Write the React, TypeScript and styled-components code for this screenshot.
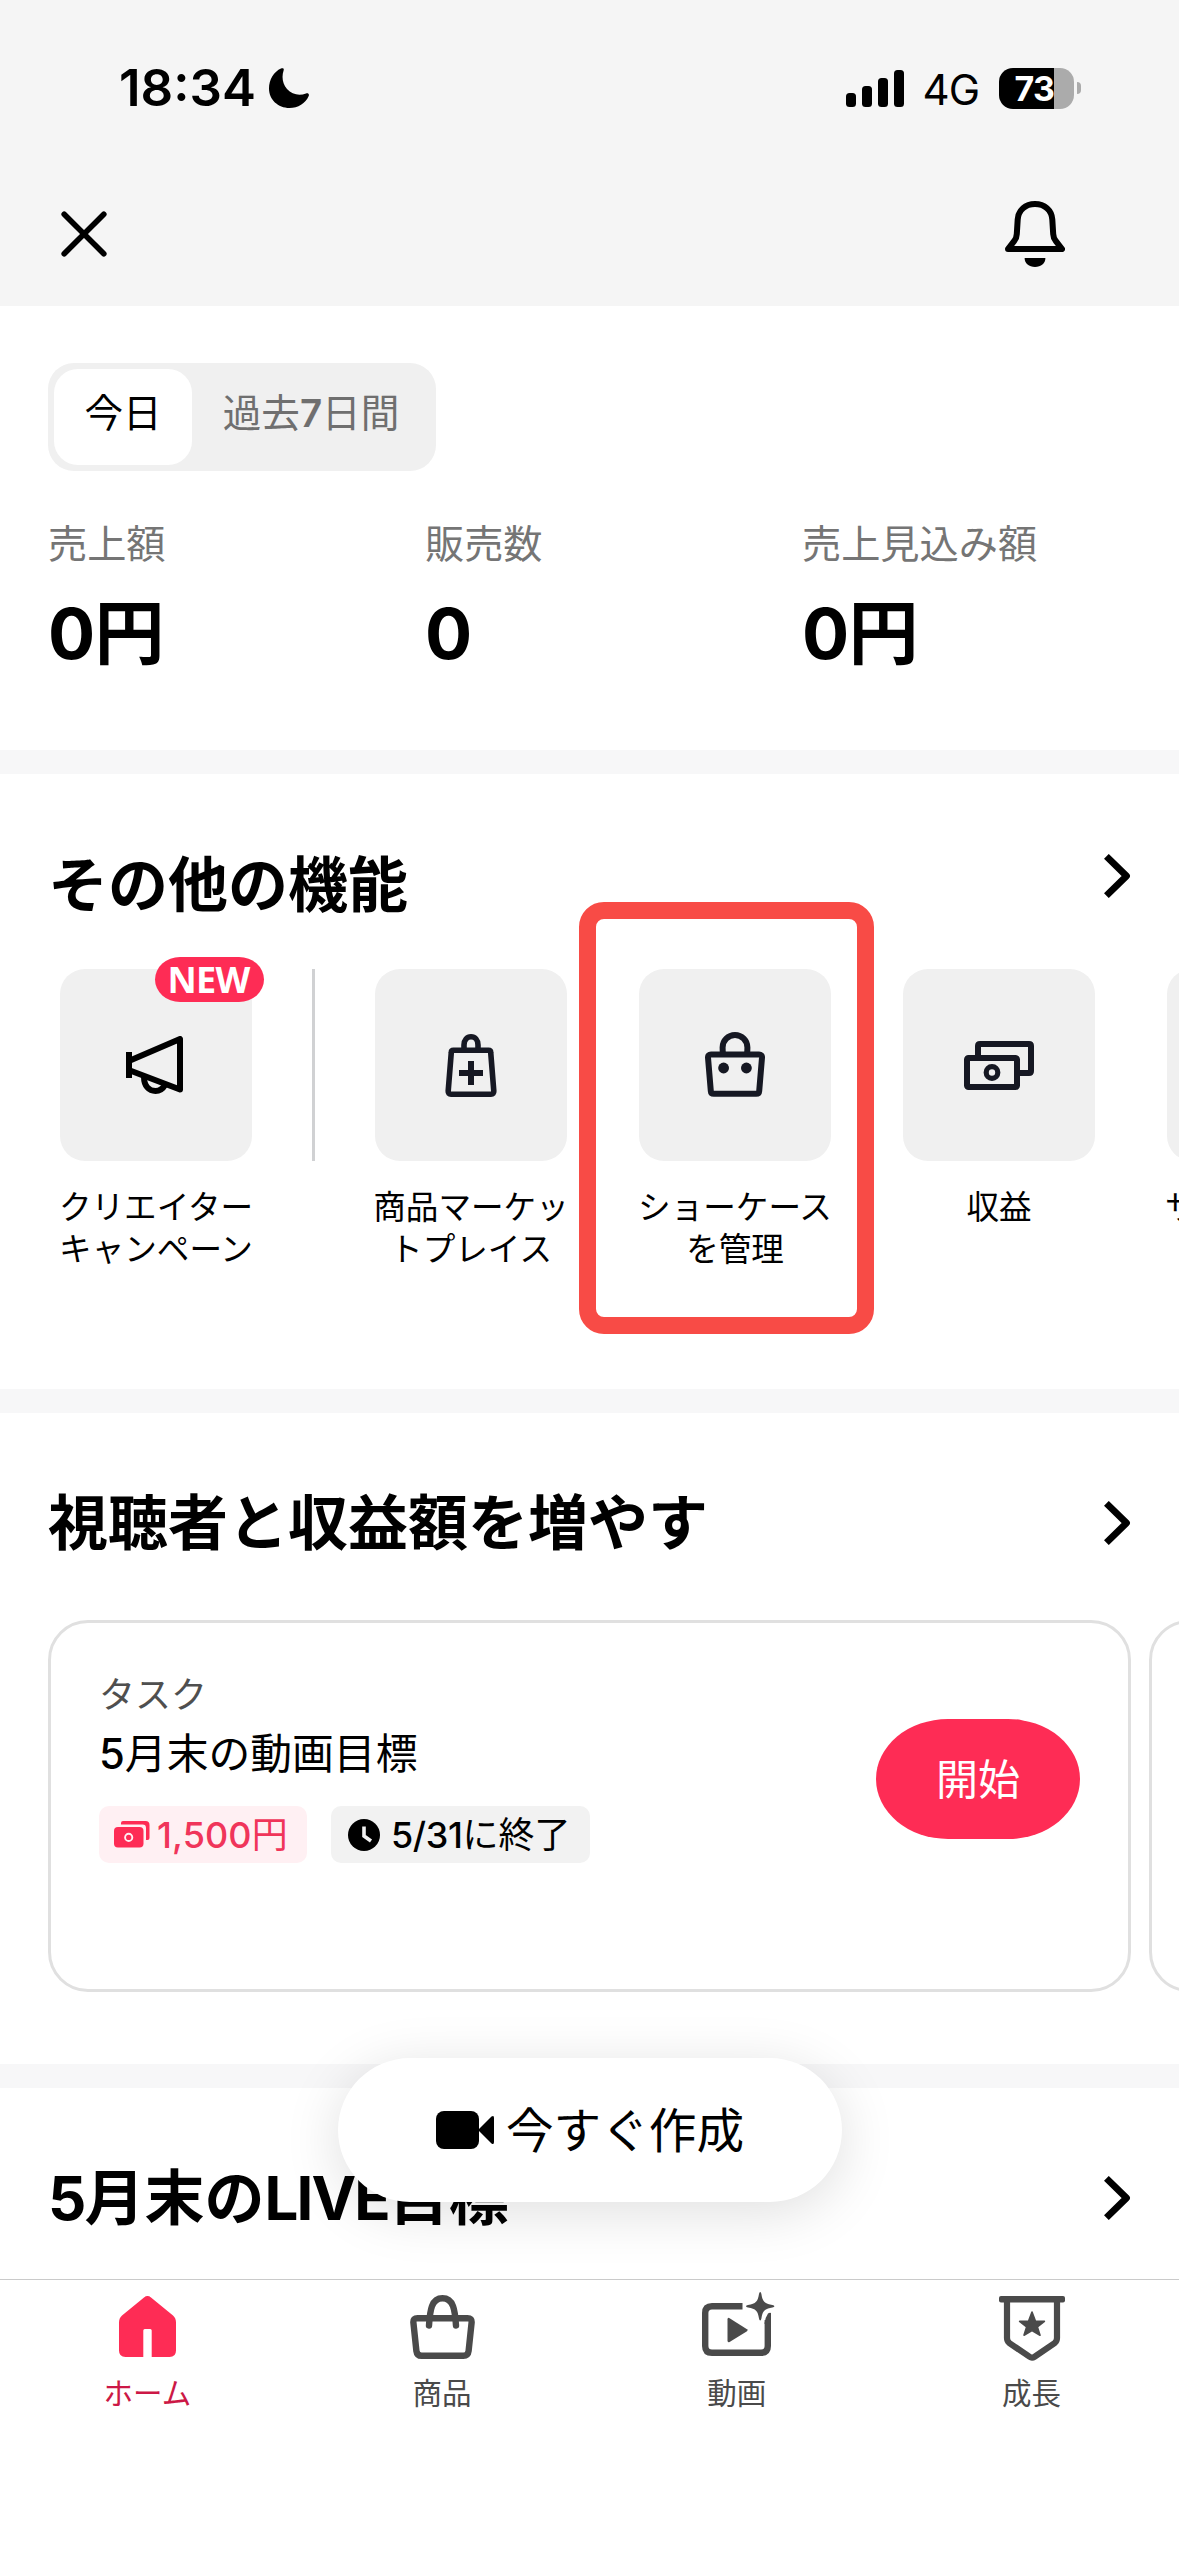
import React from "react";
import styled, { createGlobalStyle, css } from "styled-components";

const PINK = "#fe2c55";
const INK = "#161823";

const GlobalStyle = createGlobalStyle`
  *, *::before, *::after { box-sizing: border-box; }
  body {
    margin: 0;
    background: #fff;
    color: #000;
    font-family: Inter, "Noto Sans CJK JP", sans-serif;
  }
  button {
    margin: 0; padding: 0; border: 0; background: none;
    color: inherit; font: inherit; cursor: pointer;
  }
  h2, p, dl, dt, dd { margin: 0; }
  svg { display: block; flex: none; }
`;

const Screen = styled.div`
  width: 1179px;
  height: 2556px;
  display: flex;
  flex-direction: column;
  overflow: hidden;
  background: #fff;
`;

/* ---------- header ---------- */

const Header = styled.header`
  height: 306px;
  flex: none;
  background: #f5f5f5;
`;

const StatusBar = styled.div`
  height: 176px;
  padding: 0 98px 0 119px;
  display: flex;
  align-items: center;
  justify-content: space-between;
`;

const StatusGroup = styled.div<{ $gap: number }>`
  display: flex;
  align-items: center;
  gap: ${(p) => p.$gap}px;
`;

const Clock = styled.span`
  font-size: 51px;
  line-height: 60px;
  font-weight: 600;
  letter-spacing: 0;
`;

const Network = styled.span`
  font-size: 42px;
  line-height: 50px;
  letter-spacing: -1px;
  margin: 3px 1px 0 0;
`;

const Signal = styled.div`
  display: flex;
  align-items: flex-end;
  gap: 6px;
  height: 37px;
`;

const SignalBar = styled.i<{ $h: number }>`
  width: 10px;
  height: ${(p) => p.$h}px;
  border-radius: 3.5px;
  background: #000;
`;

const Battery = styled.div`
  display: flex;
  align-items: center;
  gap: 3px;
`;

const BatteryBody = styled.div`
  width: 75px;
  height: 41px;
  border-radius: 14px;
  background: linear-gradient(90deg, #000 55px, #ababab 55px);
  color: #fff;
  font-size: 34px;
  font-weight: 700;
  line-height: 41px;
  text-align: center;
  letter-spacing: -0.6px;
  padding-right: 4px;
`;

const BatteryCap = styled.i`
  width: 4px;
  height: 12px;
  border-radius: 0 6px 6px 0;
  background: #ababab;
`;

const NavBar = styled.div`
  display: flex;
  align-items: center;
  justify-content: space-between;
  height: 116px;
  padding: 0 114px 0 61px;
`;

/* ---------- sections ---------- */

const Content = styled.main`
  position: relative;
  flex: 1;
  min-height: 0;
  overflow: hidden;
`;

const Section = styled.section<{ $h: number; $last?: boolean }>`
  height: ${(p) => p.$h}px;
  overflow: hidden;
  ${(p) => !p.$last && css`border-bottom: 24px solid #f7f7f8;`}
`;

const SectionHead = styled.div<{ $top: number; $lift?: number }>`
  display: flex;
  justify-content: space-between;
  align-items: center;
  height: 80px;
  margin-top: ${(p) => p.$top}px;
  padding: 0 48px 0 48px;
  > svg { margin-bottom: ${(p) => 2 * (p.$lift ?? 0)}px; }
`;

const SectionTitle = styled.h2`
  font-size: 60px;
  line-height: 80px;
  font-weight: 700;
  white-space: nowrap;
`;

const Latin = styled.span`
  letter-spacing: -1.9px;
`;

const Segmented = styled.div`
  display: inline-flex;
  margin: 57px 0 0 48px;
  width: 388px;
  height: 108px;
  padding: 6px;
  border-radius: 26px;
  background: #f0f0f0;
`;

const Segment = styled.button<{ $active?: boolean }>`
  width: ${(p) => (p.$active ? 138 : 238)}px;
  height: 96px;
  padding-bottom: 14px;
  border-radius: 24px;
  background: ${(p) => (p.$active ? "#fff" : "transparent")};
  color: ${(p) => (p.$active ? "#000" : "#6f6f6f")};
  font-size: 38.6px;
  white-space: nowrap;
  b { font-weight: 600; }
`;

const Stats = styled.dl`
  display: grid;
  grid-template-columns: 377px 377px 1fr;
  padding: 43px 0 0 48px;
`;

const StatLabel = styled.dt`
  color: #757575;
  font-size: 39.2px;
  line-height: 60px;
`;

const StatValue = styled.dd`
  font-size: 70px;
  line-height: 96px;
  font-weight: 700;
  margin-top: 12px;
  letter-spacing: -0.6px;
`;

/* ---------- features ---------- */

const FeatureRow = styled.div`
  display: flex;
  align-items: flex-start;
  gap: 72px;
  margin-top: 44px;
  padding-left: 60px;
`;

const Feature = styled.div`
  position: relative;
  width: 192px;
  flex: none;
  display: flex;
  flex-direction: column;
  align-items: center;
`;

const Tile = styled.div`
  width: 192px;
  height: 192px;
  border-radius: 25px;
  background: #f0f0f0;
  display: flex;
  align-items: center;
  justify-content: center;
`;

const FeatureLabel = styled.div<{ $start?: boolean }>`
  margin-top: 25px;
  font-size: 32.6px;
  line-height: 42px;
  text-align: center;
  white-space: nowrap;
  ${(p) => p.$start && css`align-self: flex-start; margin-left: -2px;`}
`;

const NewBadge = styled.span`
  position: absolute;
  top: -12px;
  right: -12px;
  width: 109px;
  height: 45px;
  border-radius: 25px / 22.5px;
  background: ${PINK};
  color: #fff;
  font-family: "Noto Sans", sans-serif;
  font-weight: 700;
  font-size: 36px;
  line-height: 46px;
  letter-spacing: -0.8px;
  padding-right: 2px;
  text-align: center;
`;

const RowDivider = styled.i`
  width: 3px;
  height: 192px;
  flex: none;
  margin: 0 -12px;
  background: #d0d1d3;
`;

const Highlight = styled.div`
  position: absolute;
  top: -67px;
  left: -60.5px;
  width: 295px;
  height: 432px;
  border: 17px solid #f84b46;
  border-radius: 25px;
`;

/* ---------- tasks ---------- */

const CardRow = styled.div`
  display: flex;
  gap: 18px;
  margin-top: 57px;
  padding-left: 48px;
`;

const Card = styled.article`
  width: 1083px;
  height: 372px;
  flex: none;
  border: 3px solid #e0e0e0;
  border-radius: 40px;
  display: flex;
  justify-content: space-between;
  align-items: flex-start;
  padding: 45px 48px 0 48px;
`;

const TaskKind = styled.p`
  color: #4f4f4f;
  font-size: 36px;
  line-height: 54px;
`;

const TaskName = styled.p`
  font-size: 41.8px;
  line-height: 60px;
  margin-top: 2px;
  font-weight: 400;
  b { font-weight: 500; }
`;

const Chips = styled.div`
  display: flex;
  gap: 24px;
  margin-top: 22px;
`;

const Chip = styled.div<{ $money?: boolean }>`
  display: flex;
  align-items: center;
  width: ${(p) => (p.$money ? 208 : 259)}px;
  height: 57px;
  padding-left: ${(p) => (p.$money ? 15 : 17)}px;
  gap: ${(p) => (p.$money ? 7 : 11)}px;
  border-radius: 10px;
  background: ${(p) => (p.$money ? "#fff0f3" : "#f2f2f2")};
  color: ${(p) => (p.$money ? "#f0355a" : "#000")};
  font-size: 36px;
  line-height: 56px;
  white-space: nowrap;
  b { font-weight: 500; letter-spacing: ${(p) => (p.$money ? 0.1 : -0.4)}px; }
`;

const StartButton = styled.button`
  width: 204px;
  height: 120px;
  margin-top: 51px;
  padding-bottom: 5px;
  border-radius: 72px / 60px;
  background: ${PINK};
  color: #fff;
  font-size: 42px;
`;

/* ---------- floating action and tabs ---------- */

const CreateButton = styled.button`
  position: absolute;
  left: 338px;
  bottom: 77px;
  width: 504px;
  height: 144px;
  border-radius: 72px;
  background: #fff;
  box-shadow: 0 10px 56px rgba(0, 0, 0, 0.13);
  display: flex;
  align-items: center;
  padding-left: 98px;
  gap: 12px;
  font-size: 47.6px;
`;

const CreateLabel = styled.span`
  padding-bottom: 5px;
`;

const TabBar = styled.nav`
  height: 277px;
  flex: none;
  border-top: 1px solid #cacaca;
  display: grid;
  grid-template-columns: repeat(4, 1fr);
  background: #fff;
`;

const Tab = styled.button<{ $active?: boolean }>`
  display: flex;
  flex-direction: column;
  align-items: center;
  color: ${(p) => (p.$active ? "#cc1846" : "#4a4a4a")};
  font-size: 29.5px;
  line-height: 44px;
`;

/* $nudge moves the icon's optical centre down (or up when negative). */
const TabIcon = styled.span<{ $nudge?: number }>`
  height: 91px;
  padding-top: ${(p) => 6 + 2 * (p.$nudge ?? 0)}px;
  padding-bottom: 4px;
  display: flex;
  align-items: center;
`;

/* ---------- icons ---------- */

const Moon = () => (
  <svg width="40" height="40" viewBox="0 0 40 40">
    <path d="M12 .5C14-.3 15.3.5 14.6 2.5C12.5 9 13.5 16 18 21C23 26.5 30 28 37 25.5C39 24.8 40.5 26 39.7 28C36.5 35.5 29 40 20.5 40C9 40 0 31.5 0 20.5C0 11.5 5 3.5 12 .5Z" />
  </svg>
);

const Close = () => (
  <svg width="46" height="46" viewBox="0 0 46 46" fill="none" stroke="#000" strokeWidth="5.6" strokeLinecap="round">
    <path d="M3.2 3.2L42.8 42.8M42.8 3.2L3.2 42.8" />
  </svg>
);

const Bell = () => (
  <svg width="60" height="66" viewBox="0 0 60 66">
    <path
      d="M3 48L9.3 39.8Q11.6 37 11.8 33L12.7 18.5C13.3 9 20.5 3 30 3S46.7 9 47.3 18.5L48.2 33Q48.4 37 50.7 39.8L57 48Z"
      fill="none"
      stroke="#000"
      strokeWidth="6"
      strokeLinejoin="round"
    />
    <path d="M19.6 57H40.4C40.4 62.5 36 66 30 66S19.6 62.5 19.6 57Z" />
  </svg>
);

const Chevron = () => (
  <svg width="27" height="44" viewBox="0 0 27 44" fill="none" stroke="#000" strokeWidth="6.8" strokeLinejoin="round">
    <path d="M2.4 2.4L22.5 22L2.4 41.6" />
  </svg>
);

const Megaphone = () => (
  <svg width="60" height="58" viewBox="0 0 60 58" fill="none" stroke="#000" strokeWidth="6" strokeLinejoin="round">
    <path d="M3 16V42" />
    <path d="M4 24.5L54 3V53.5L4 34.5" />
    <path d="M18 41C18 50 23 55 29.5 55C34 55 37 52.5 39 49" />
  </svg>
);

const BagPlus = () => (
  <svg width="52" height="63" viewBox="0 0 52 63" fill="none" stroke={INK} strokeWidth="5.6" strokeLinejoin="round">
    <path d="M19 16V11C19 6 22 2.8 26 2.8S33 6 33 11V16" />
    <path d="M8.4 16.3H43.6Q45.6 16.3 45.7 18.3L48.8 57Q48.9 60.2 46 60.2H6Q3.1 60.2 3.2 57L6.3 18.3Q6.4 16.3 8.4 16.3Z" />
    <path d="M26 27V51M14 39H38" strokeWidth="6" />
  </svg>
);

const ShowcaseBag = () => (
  <svg width="60" height="66" viewBox="0 0 60 66" fill="none" stroke={INK} strokeWidth="6" strokeLinejoin="round">
    <path d="M18 22Q17.6 19 17.6 15.5A12.4 12.4 0 0 1 42.4 15.5Q42.4 19 42 22" />
    <path d="M6 22.6H54Q57.2 22.6 57 25.6L54.2 59Q54 61.8 51.2 61.8H8.8Q6 61.8 5.8 59L3 25.6Q2.8 22.6 6 22.6Z" />
    <circle cx="18.6" cy="36" r="5.4" fill={INK} stroke="none" />
    <circle cx="41.4" cy="36" r="5.4" fill={INK} stroke="none" />
  </svg>
);

const Money = () => (
  <svg width="70" height="49" viewBox="0 0 70 49" fill="none" stroke={INK} strokeWidth="6" strokeLinejoin="round">
    <path d="M14 17V5Q14 3 16 3H65Q67 3 67 5V30Q67 32 65 32H54" />
    <rect x="3" y="17" width="50" height="29" rx="1.5" />
    <circle cx="28" cy="31.5" r="5.8" strokeWidth="5.2" />
  </svg>
);

const MoneySolid = () => (
  <svg width="36" height="27" viewBox="0 0 36 27" fill={PINK}>
    <path d="M7 3.6V2Q7 0 9 0H31.5A4 4 0 0 1 35.5 4V17Q35.5 19 33.5 19H32V7A3.4 3.4 0 0 0 28.6 3.6Z" />
    <rect x="0" y="6" width="29.5" height="20.5" rx="4" />
    <circle cx="14.7" cy="16.4" r="3.6" fill="none" stroke="#fff0f3" strokeWidth="1.9" />
  </svg>
);

const ClockSolid = () => (
  <svg width="32" height="32" viewBox="0 0 32 32">
    <circle cx="16" cy="16" r="16" />
    <path d="M16 7.5V17L23 22" fill="none" stroke="#f2f2f2" strokeWidth="3.6" />
  </svg>
);

const Camera = () => (
  <svg width="58" height="38" viewBox="0 0 58 38">
    <rect width="43" height="38" rx="8" />
    <path d="M42 19L55.5 5.6Q58 3.8 58 7V31Q58 34.2 55.5 32.4Z" />
  </svg>
);

const Home = () => (
  <svg width="57" height="61" viewBox="0 0 57 61" fill={PINK}>
    <path d="M25 1.5Q28.5-1.4 32 1.5L54 19.5Q57 22.2 57 26.5V54.5Q57 61 50.5 61H32.7V34.5Q32.7 33 31.2 33H25.8Q24.3 33 24.3 34.5V61H6.5Q0 61 0 54.5V26.5Q0 22.2 3 19.5Z" />
  </svg>
);

const TabBag = () => (
  <svg width="65" height="64" viewBox="0 0 65 64" fill="none" stroke="#4a4a4a" strokeWidth="6.4" strokeLinejoin="round">
    <path d="M7.5 23.2H57.5Q62 23.2 61.6 27.6L58.6 56Q58 60.8 53.4 60.8H11.6Q7 60.8 6.4 56L3.4 27.6Q3 23.2 7.5 23.2Z" />
    <path d="M19 30.5C20 15 21.5 3.2 32.5 3.2S45 15 46 30.5" strokeLinecap="round" />
  </svg>
);

const TabVideo = () => (
  <svg width="69" height="64" viewBox="0 0 69 64" fill="#4a4a4a" overflow="visible">
    <path d="M40.5 14.2H10Q3.2 14.2 3.2 21V54Q3.2 60.8 10 60.8H59Q65.8 60.8 65.8 54V28" fill="none" stroke="#4a4a4a" strokeWidth="6.4" />
    <path d="M62.6 31Q63 26 66 21.5Q67.5 20.5 69 21V32H62.6Z" />
    <path d="M25.5 27.5Q25.5 25 27.6 26.3L45 37.3Q46.2 38.2 45 39.2L27.6 50Q25.5 51 25.5 48.6Z" />
    <path d="M58.2 0Q59 0 59.4 2C60.6 9.6 62.4 11.6 70.4 13Q72.4 13.4 72.4 14.2T70.4 15.4C62.4 16.8 60.6 18.8 59.4 26.4Q59 28.4 58.2 28.4T57 26.4C55.8 18.8 54 16.8 46 15.4Q44 15 44 14.2T46 13C54 11.6 55.8 9.6 57 2Q57.4 0 58.2 0Z" />
  </svg>
);

const TabBadge = () => (
  <svg width="66" height="65" viewBox="0 0 66 65" fill="#4a4a4a">
    <rect width="66" height="6.6" rx="2" />
    <path d="M8 4V42Q8 45 10.3 47L30.6 60.8Q33 62.4 35.4 60.8L55.7 47Q58 45 58 42V4" fill="none" stroke="#4a4a4a" strokeWidth="6.2" />
    <path
      d="M33 16L36.4 25L45.4 25.4L38.4 31L41 39.2L33 34.6L25 39.2L27.6 31L20.6 25.4L29.6 25Z"
      stroke="#4a4a4a"
      strokeWidth="1.6"
      strokeLinejoin="round"
    />
  </svg>
);

/* ---------- data ---------- */

const stats = [
  { label: "売上額", value: "0円" },
  { label: "販売数", value: "0" },
  { label: "売上見込み額", value: "0円" },
];

type FeatureItem = {
  icon?: React.ReactNode;
  lines: string[];
  highlighted?: boolean;
  start?: boolean;
};

const features: FeatureItem[] = [
  { icon: <BagPlus />, lines: ["商品マーケッ", "トプレイス"] },
  { icon: <ShowcaseBag />, lines: ["ショーケース", "を管理"], highlighted: true },
  { icon: <Money />, lines: ["収益"] },
  { lines: ["サ"], start: true },
];

const tabs = [
  { icon: <Home />, label: "ホーム", active: true },
  { icon: <TabBag />, label: "商品" },
  { icon: <TabVideo />, label: "動画", nudge: -3 },
  { icon: <TabBadge />, label: "成長", nudge: 2 },
];

const Lines = ({ lines, start }: { lines: string[]; start?: boolean }) => (
  <FeatureLabel $start={start}>
    {lines.map((line) => (
      <div key={line}>{line}</div>
    ))}
  </FeatureLabel>
);

export default function App() {
  return (
    <Screen lang="ja">
      <GlobalStyle />
      <Header>
        <StatusBar>
          <StatusGroup $gap={13}>
            <Clock>18:34</Clock>
            <Moon />
          </StatusGroup>
          <StatusGroup $gap={19}>
            <Signal>
              {[14, 21, 29, 37].map((h) => (
                <SignalBar key={h} $h={h} />
              ))}
            </Signal>
            <Network>4G</Network>
            <Battery>
              <BatteryBody>73</BatteryBody>
              <BatteryCap />
            </Battery>
          </StatusGroup>
        </StatusBar>
        <NavBar>
          <button aria-label="閉じる"><Close /></button>
          <button aria-label="通知"><Bell /></button>
        </NavBar>
      </Header>

      <Content>
        <Section $h={468}>
          <Segmented>
            <Segment $active>今日</Segment>
            <Segment>過去<b>7</b>日間</Segment>
          </Segmented>
          <Stats>
            {stats.map((s) => (
              <div key={s.label}>
                <StatLabel>{s.label}</StatLabel>
                <StatValue>{s.value}</StatValue>
              </div>
            ))}
          </Stats>
        </Section>

        <Section $h={639}>
          <SectionHead $top={71} $lift={9}>
            <SectionTitle>その他の機能</SectionTitle>
            <Chevron />
          </SectionHead>
          <FeatureRow>
            <Feature>
              <Tile><Megaphone /></Tile>
              <NewBadge>NEW</NewBadge>
              <Lines lines={["クリエイター", "キャンペーン"]} />
            </Feature>
            <RowDivider />
            {features.map((f) => (
              <Feature key={f.lines[0]}>
                <Tile>{f.icon}</Tile>
                <Lines lines={f.lines} start={f.start} />
                {f.highlighted && <Highlight />}
              </Feature>
            ))}
          </FeatureRow>
        </Section>

        <Section $h={675}>
          <SectionHead $top={70}>
            <SectionTitle>視聴者と収益額を増やす</SectionTitle>
            <Chevron />
          </SectionHead>
          <CardRow>
            <Card>
              <div>
                <TaskKind>タスク</TaskKind>
                <TaskName><b>5</b>月末の動画目標</TaskName>
                <Chips>
                  <Chip $money><MoneySolid /><span><b>1,500</b>円</span></Chip>
                  <Chip><ClockSolid /><span><b>5/31</b>に終了</span></Chip>
                </Chips>
              </div>
              <StartButton>開始</StartButton>
            </Card>
            <Card />
          </CardRow>
        </Section>

        <Section $h={191} $last>
          <SectionHead $top={70}>
            <SectionTitle><Latin>5</Latin>月末の<Latin>LIVE</Latin>目標</SectionTitle>
            <Chevron />
          </SectionHead>
        </Section>

        <CreateButton>
          <Camera />
          <CreateLabel>今すぐ作成</CreateLabel>
        </CreateButton>
      </Content>

      <TabBar>
        {tabs.map((t) => (
          <Tab key={t.label} $active={t.active}>
            <TabIcon $nudge={t.nudge}>{t.icon}</TabIcon>
            {t.label}
          </Tab>
        ))}
      </TabBar>
    </Screen>
  );
}
